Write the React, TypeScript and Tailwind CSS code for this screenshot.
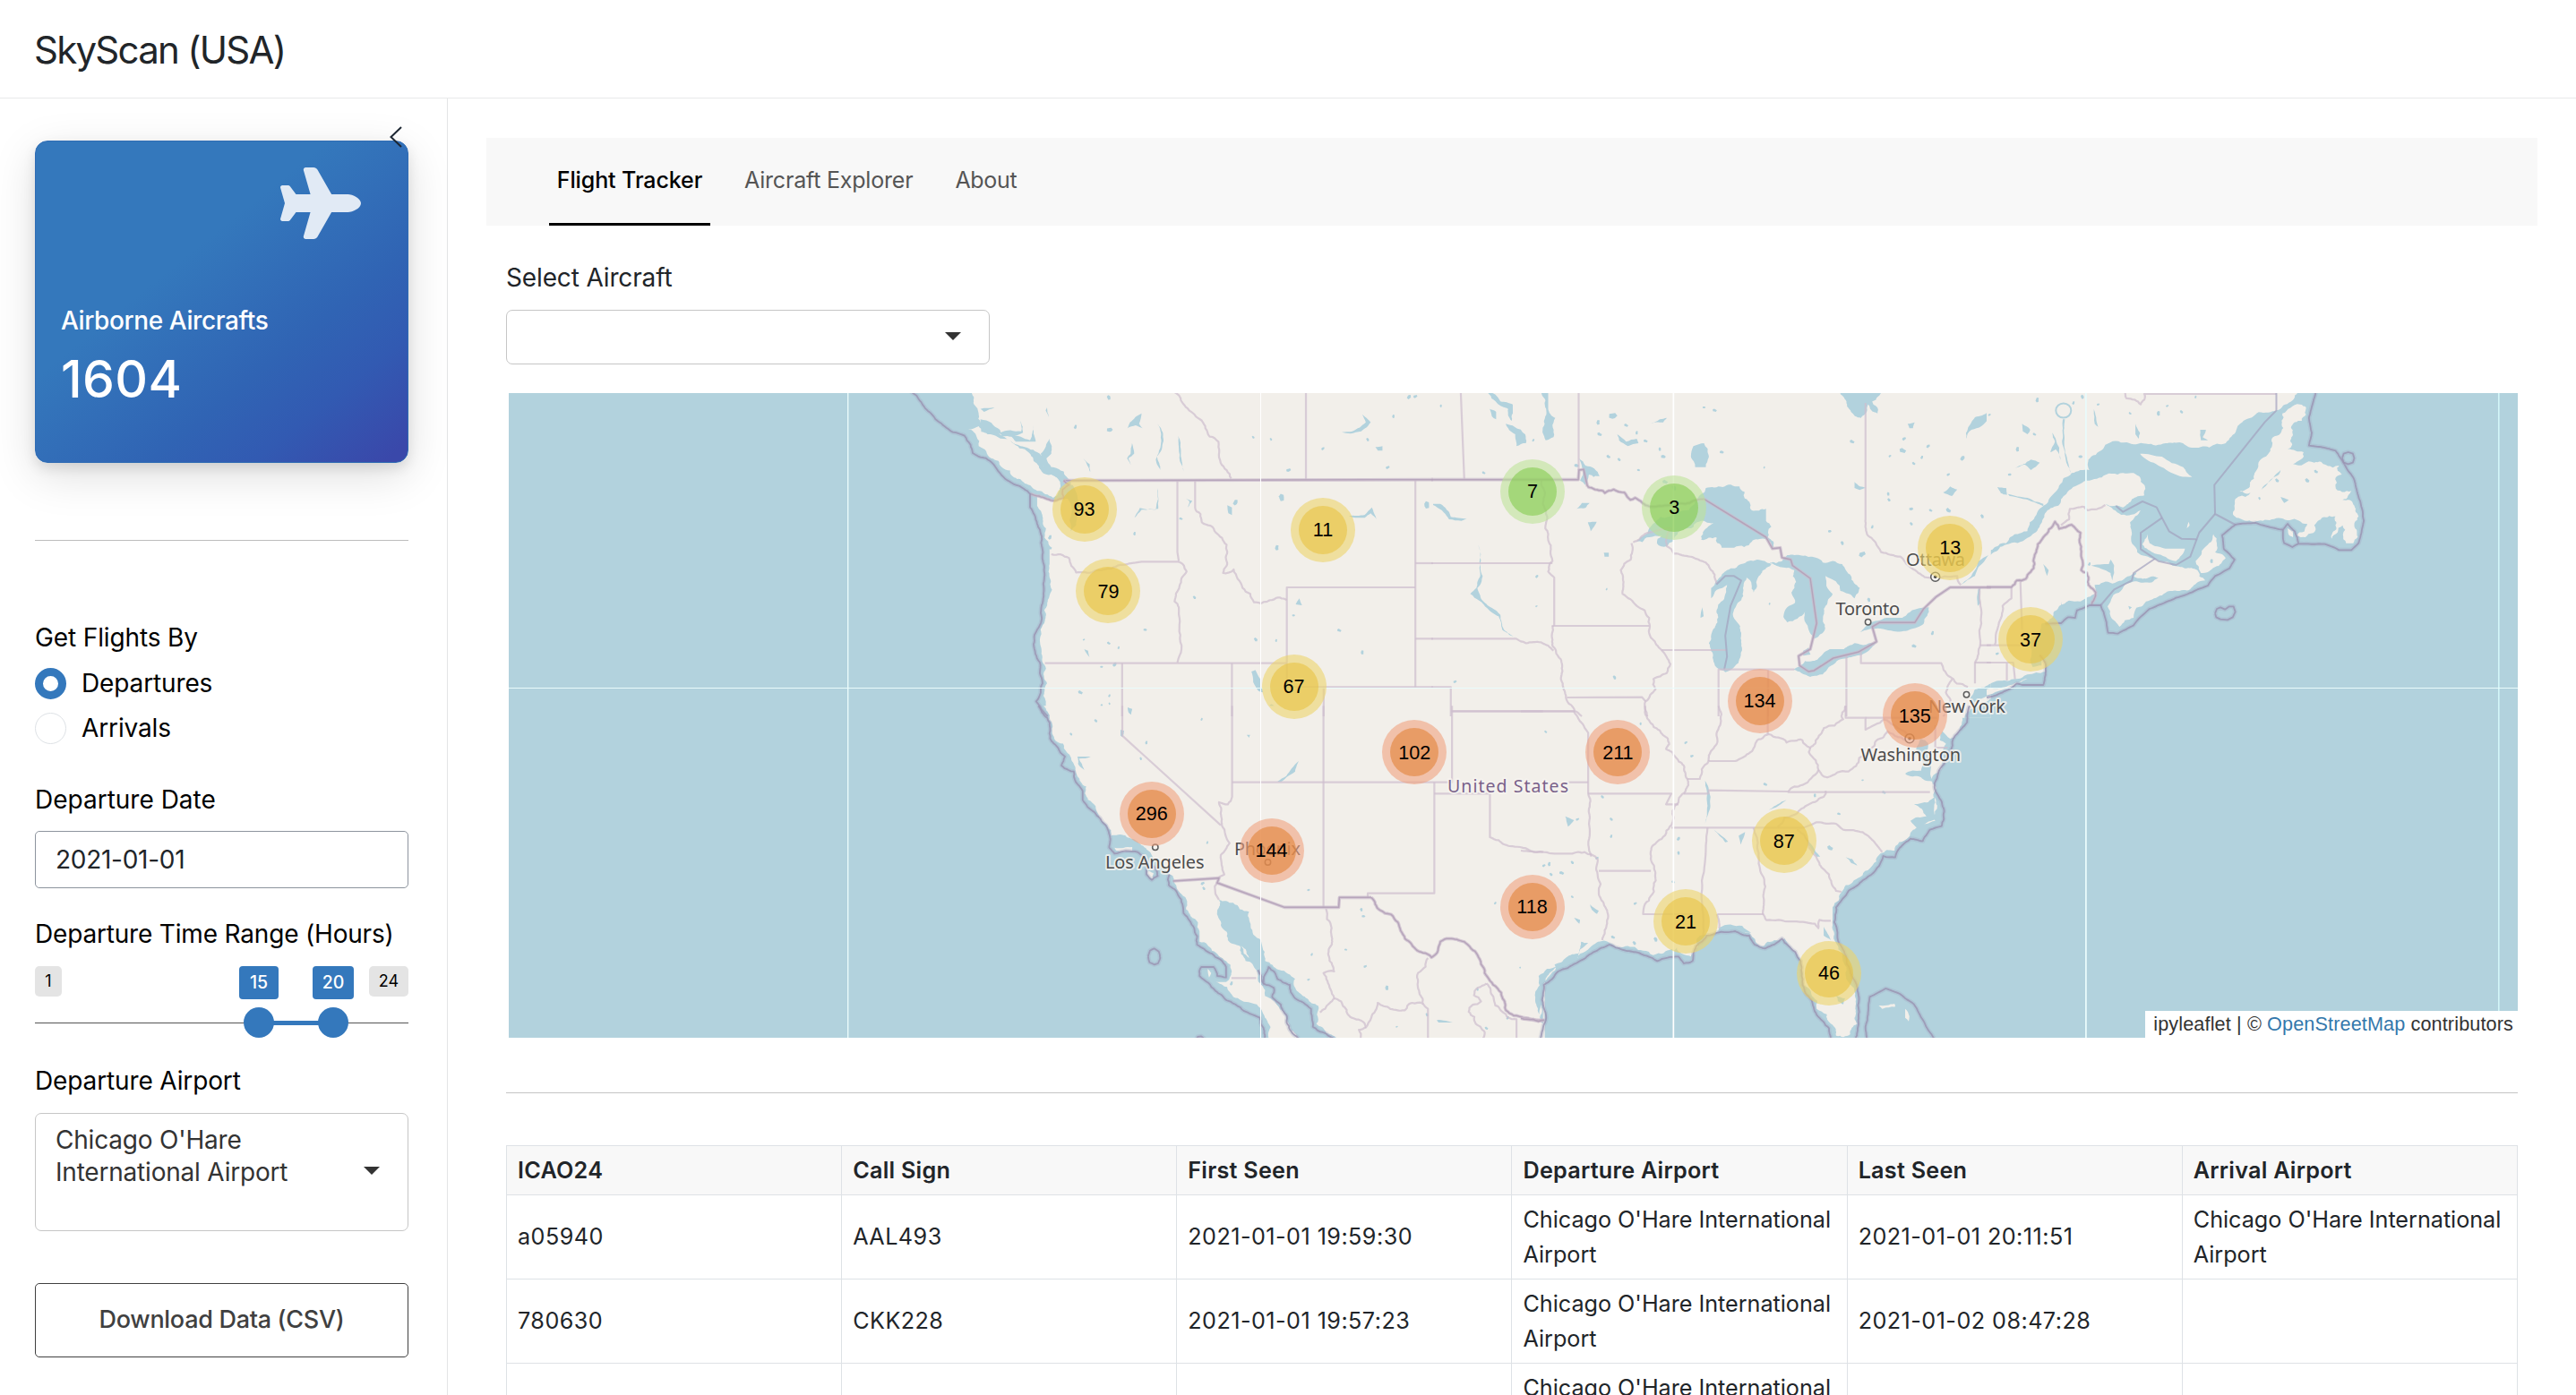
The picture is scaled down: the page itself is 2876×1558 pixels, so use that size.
import { FaPlane } from "react-icons/fa6";

type Kind = "land" | "water" | "state" | "nation" | "sea" | "seaLight";
type Shape = [Kind, number, string];
type Sheet = { x: number; y: number; shapes: Shape[]; specks: number[][] };

// Sheets of the base map. Each has its own origin and a common scale.
const SX = 0.3954;
const SY = 1 / 3;

const SHEETS: Sheet[] = [
  {
    x: 980,
    y: 430,
    shapes: [
      ["land", 7, "265,20 270,60 285,100 290,125 345,165 395,200 430,215 450,250 490,285 525,290 545,320 545,350 540,380 505,388 450,375 450,405 465,440 475,480 485,540 485,600 487,650 480,720 472,790 458,850 462,900 475,950 478,1000 468,1040 475,1080 495,1115 1580,1115 1580,20"],
      ["land", 9, "255,148 285,138 310,165 370,180 415,215 450,265 490,300 515,330 520,365 495,378 450,355 415,330 385,310 350,275 320,245 285,205"],
      ["water", 5, "290,115 345,150 350,165 320,160 290,140"],
      ["water", 6, "425,215 450,225 490,275 525,290 528,330 505,310 470,275 440,255"],
      ["water", 4, "520,330 550,335 570,400 560,470 545,490 548,420 530,370 500,385 515,350"],
      ["water", 5, "345,160 405,155 403,120 410,160 350,172"],
      ["water", 4, "375,170 430,185 440,135 446,190 390,190"],
      ["water", 4, "460,230 485,180 490,230 470,250"],
      ["water", 4, "290,80 330,75 300,90"],
      ["water", 3, "1055,960 1066,955 1080,985 1088,1030 1075,1025 1060,995"],
      ["water", 3, "718,195 724,230 708,245 715,268 704,245 714,230"],
      ["water", 3, "790,130 805,160 802,215 788,240 798,285 785,250 798,210 800,165"],
      ["water", 3, "848,170 856,220 864,290 853,255 850,210"],
      ["water", 3, "478,75 483,108 474,85"],
      ["water", 3, "580,245 598,265 600,292 592,270"],
      ["water", 3, "712,125 745,95 738,130 748,145 728,135 705,145"],
      ["water", 3, "1330,438 1375,435 1395,410 1408,450 1392,430 1375,445 1340,443"],
      ["water", 3, "1310,158 1340,155 1378,125 1368,98 1392,125 1365,155 1335,163"],
      ["water", 3, "725,445 740,412 785,418 790,345 792,415 745,418"],
      ["water", 3, "987,403 1000,410 1000,436 990,430"],
      ["water", 3, "870,380 888,388 876,410 880,390"],
      ["water", 2, "1180,735 1190,715 1198,738"],
      ["water", 2, "583,885 594,890 598,912 590,900"],
      ["water", 2, "705,1078 718,1080 722,1105 710,1100"],
      ["water", 2, "1405,208 1425,205 1425,220 1412,220"],
      ["state", 7, "835,20 858,55 895,100 925,145 962,190 968,260 998,313"],
      ["state", 0, "1209,20 1209,315"],
      ["state", 0, "846,322 846,560 850,590"],
      ["state", 8, "896,322 896,410 915,460 985,535 975,630 1005,618 1030,680 1062,728 1135,712 1155,720"],
      ["state", 6, "490,567 540,580 560,628 620,620 660,615 710,598 745,592 850,592"],
      ["state", 6, "850,592 872,625 838,725 850,745 846,930"],
      ["state", 0, "472,932 1155,932"],
      ["state", 0, "690,932 690,1110"],
      ["state", 0, "1000,932 1000,1110"],
      ["state", 0, "1518,678 1155,678 1155,1012 1568,1012"],
      ["state", 0, "1259,1012 1259,1110"],
      ["state", 0, "1518,320 1518,1012"],
      ["state", 0, "1518,597 1568,597"],
      ["state", 0, "1518,850 1568,850"],
      ["nation", 0, "525,320 1568,317"],
      ["nation", 4, "525,320 540,335 522,350 525,378 500,388 455,372 430,365"],
      ["sea", 4, "92,20 150,95 212,158 245,170 262,200 268,228 305,245 345,295 390,335 430,365 430,410 450,465 465,550 470,650 463,780 450,820 440,868 458,930 465,1000 447,1060 480,1110"],
    ],
    specks: [[652, 42, 8], [655, 150, 10], [558, 140, 7], [1060, 175, 5], [1110, 182, 5], [1257, 213, 6], [1160, 285, 8], [1383, 183, 6], [1500, 40, 8], [1518, 38, 7], [1456, 105, 6], [1440, 276, 7], [856, 448, 6], [1127, 545, 9], [894, 712, 6], [755, 820, 6], [582, 853, 4], [652, 865, 6], [680, 880, 5], [669, 936, 8], [632, 944, 5], [1067, 853, 7], [1125, 856, 5], [1303, 822, 7], [1368, 896, 7], [1174, 772, 5], [572, 1030, 8], [654, 1041, 5], [632, 1075, 6], [654, 1068, 4], [914, 1092, 4], [1113, 1076, 8], [1140, 377, 12], [1010, 393, 10], [725, 498, 6], [486, 510, 8], [485, 545, 8], [1550, 402, 12]],
  },
  {
    x: 1600,
    y: 430,
    shapes: [
      ["land", 0, "-5,20 1575,20 1575,1115 -5,1115"],
      ["water", 10, "565,525 610,480 690,430 740,390 770,345 865,340 880,380 900,420 940,415 940,455 955,475 945,510 962,545 935,515 900,525 850,545 815,545 800,510 757,518 762,500 792,462 745,460 720,480 690,500 660,540 632,530 645,505 610,510"],
      ["water", 8, "955,600 915,585 870,600 830,620 785,680 785,715 830,670 800,760 787,830 790,900 805,950 825,962 850,945 872,880 870,830 855,790 860,730 875,680 885,645 905,695 920,640 945,610"],
      ["water", 8, "950,595 1020,620 1025,660 1022,730 990,770 1000,795 1050,760 1075,850 1104,825 1108,740 1128,700 1108,640 1150,690 1190,715 1205,680 1180,640 1155,600 1100,595 1080,578 1000,570 985,590"],
      ["water", 6, "1018,953 1050,925 1085,920 1120,885 1160,885 1190,865 1255,862 1230,890 1140,925 1100,970 1065,978 1040,965"],
      ["water", 3, "1045,890 1060,880 1066,903 1045,907"],
      ["water", 6, "1205,828 1230,795 1280,780 1325,780 1340,765 1400,745 1385,800 1345,820 1300,825 1240,815"],
      ["water", 7, "150,20 190,55 225,65 225,95 222,120 212,80 180,60 165,45"],
      ["water", 6, "205,130 230,140 260,165 262,195 235,205 232,165"],
      ["water", 7, "300,20 325,20 325,80 345,110 340,175 318,185 315,130 320,90"],
      ["water", 4, "160,80 178,90 178,115 166,105"],
      ["water", 6, "735,205 765,195 778,235 770,275 740,275 728,240"],
      ["water", 8, "1145,20 1268,20 1240,55 1255,95 1228,65 1208,110 1180,90 1165,50"],
      ["water", 6, "1568,90 1530,108 1505,180 1520,150 1568,115"],
      ["water", 6, "1515,1055 1530,1020 1575,995 1575,1040 1550,1050 1525,1070"],
      ["water", 5, "1500,1115 1520,1085 1575,1050 1575,1115"],
      ["water", 4, "405,415 420,395 442,395 430,412"],
      ["water", 3, "482,562 496,562 496,575 484,575"],
      ["water", 4, "412,245 430,270 455,280 470,305 440,300 430,335 415,320 425,285"],
      ["water", 4, "520,165 545,190 575,180 580,195 550,205 525,185"],
      ["water", 4, "612,130 640,115 660,110 650,125"],
      ["water", 4, "1190,325 1205,340 1222,345 1205,352 1190,345"],
      ["water", 4, "1440,360 1460,340 1480,350 1465,372"],
      ["water", 3, "1340,130 1360,125 1355,145 1345,145"],
      ["water", 3, "1540,680 1547,680 1545,730 1538,740"],
      ["water", 3, "437,460 462,458 445,490"],
      ["water", 3, "0,398 20,398 45,425 50,442 95,448 80,455 45,450 25,420 0,402"],
      ["water", 4, "127,535 132,600 140,640 125,680 135,715 190,770 200,820 235,848 195,820 185,775 130,722 105,700 122,680 133,640"],
      ["water", 3, "760,745 764,775 755,780"],
      ["water", 3, "1568,570 1540,610 1530,640 1490,670 1520,640 1540,590"],
      ["state", 0, "78,20 88,315"],
      ["state", 0, "411,20 411,285"],
      ["state", 6, "305,320 310,400 322,440 325,520 337,590 325,625 342,645 342,806"],
      ["state", 0, "-5,597 337,597"],
      ["state", 0, "335,807 610,807"],
      ["state", 5, "-5,850 235,850 262,865 305,862 340,890"],
      ["state", 6, "338,807 336,860 342,880 365,960 375,1040 400,1092 420,1110"],
      ["state", 0, "50,1093 400,1093"],
      ["state", 0, "-5,1012 50,1012 50,1110"],
      ["state", 6, "560,530 558,585 530,620 535,700 575,740 610,780 612,807 618,850 645,888 670,935 660,965 622,985 628,1020 600,1060 605,1110"],
      ["state", 0, "378,1047 590,1046 600,1060"],
      ["state", 0, "645,888 828,888"],
      ["state", 6, "565,527 640,485 672,480 660,540 680,565 770,595 795,635 800,665"],
      ["seaLight", 0, "800,668 825,640 850,640 870,655 840,740 825,840 830,910 822,953"],
      ["state", 0, "806,1110 806,953 1020,953"],
      ["state", 0, "946,955 946,1110"],
      ["state", 0, "1167,905 1167,1110"],
      ["state", 6, "1208,895 1208,932 1435,932 1455,975 1510,1012"],
      ["state", 5, "1465,985 1448,1030 1465,1080 1440,1110"],
      ["state", 4, "1542,680 1545,870 1530,930 1530,1000"],
      ["state", 0, "1530,930 1575,930"],
      ["state", 0, "1545,872 1575,872"],
      ["state", 5, "1221,60 1221,450 1225,500 1265,560 1320,575 1370,630 1410,650 1480,640 1490,670"],
      ["nation", 0, "-5,317 410,317 412,285 425,283 436,340"],
      ["nation", 6, "436,340 480,355 485,362 510,350 540,360 557,385 570,378 600,403 680,400 765,382"],
      ["nation", 0, "765,382 940,510 958,548 980,545 985,578 1010,585 1015,605 1065,648 1083,798 1065,885 1032,908 1035,940 1060,960 1075,957 1130,915 1200,895 1252,860 1240,810 1260,796 1360,796 1385,750 1420,710 1460,678 1575,678"],
    ],
    specks: [[22, 70, 5], [143, 294, 6], [283, 185, 5], [293, 641, 6], [292, 741, 4], [490, 684, 4], [508, 103, 14], [466, 125, 8], [545, 135, 7], [600, 188, 7], [470, 165, 8], [495, 240, 7], [525, 250, 6], [580, 285, 5], [650, 240, 8], [655, 325, 9], [680, 345, 9], [935, 276, 4], [815, 225, 7], [795, 85, 7], [1183, 190, 8], [1290, 238, 5], [1326, 220, 11], [1357, 263, 6], [1455, 300, 6], [1495, 245, 9], [1398, 205, 7], [1380, 242, 6], [1285, 365, 6], [1287, 385, 6], [1455, 420, 9], [1350, 415, 7], [1240, 475, 6], [1350, 465, 6], [1212, 567, 12], [1155, 530, 7], [1120, 490, 6], [1230, 720, 7], [1410, 831, 7], [950, 733, 4], [62, 994, 6], [512, 980, 7], [710, 1095, 5], [1358, 875, 8], [1405, 420, 6], [765, 75, 5], [640, 215, 6], [575, 160, 6], [1330, 180, 7], [1550, 440, 7], [455, 300, 8], [405, 270, 8]],
  },
  {
    x: 2220,
    y: 430,
    shapes: [
      ["land", 8, "-5,20 885,20 815,85 720,120 700,150 670,195 575,210 500,195 390,192 330,200 290,240 285,285 235,295 170,385 110,490 50,530 -5,572"],
      ["land", 8, "-5,580 50,535 110,512 160,430 220,365 320,310 380,295 425,305 442,340 440,370 380,410 330,400 375,435 430,420 400,460 405,500 420,560 470,580 400,640 350,665 300,670 305,700 260,725 200,740 180,780 150,800 120,850 125,900 160,930 160,960 110,970 75,985 -5,1005"],
      ["land", 9, "470,585 520,605 590,620 612,655 540,690 490,705 445,725 410,780 370,810 345,775 350,710 390,665 480,646 410,640 450,590"],
      ["land", 7, "635,500 645,530 640,560 670,580 640,610 600,630 585,590 610,545"],
      ["land", 6, "450,500 455,530 500,548 555,548 530,590 470,565 435,535"],
      ["land", 4, "428,230 490,240 550,275 575,308 540,305 480,270"],
      ["land", 12, "880,65 897,75 885,120 855,180 845,215 890,225 860,265 920,260 990,270 998,300 980,340 1025,355 1000,385 1030,400 1045,440 1030,530 1010,530 1000,470 970,515 980,440 920,470 895,510 870,505 900,465 800,450 700,445 695,410 740,360 705,355 735,345 760,280 800,180 830,95"],
      ["land", 3, "1020,400 1030,405 1000,460 990,450"],
      ["land", 4, "560,480 565,458 568,470"],
      ["land", 4, "845,480 860,490 860,510 850,505"],
      ["land", 6, "-5,1020 75,998 110,985 60,1015 -5,1040"],
      ["water", 3, "780,335 825,285 820,300 770,352"],
      ["water", 4, "25,342 50,345 52,368 35,362"],
      ["water", 4, "180,160 200,210 205,255 190,215 175,225 188,190"],
      ["water", 4, "95,130 118,150 110,165 97,155"],
      ["water", 4, "75,280 120,250 145,260 120,285 100,265"],
      ["water", 3, "210,115 216,115 214,190 225,260 232,300 220,260 208,190"],
      ["water", 3, "298,80 305,120 310,140 300,130"],
      ["water", 3, "415,130 428,160 424,180 415,165"],
      ["water", 3, "598,150 614,150 605,175 620,185 600,185"],
      ["water", 3, "205,725 215,780 200,770"],
      ["water", 3, "155,600 170,620 165,640"],
      ["water", 3, "825,375 848,385 835,395"],
      ["water", 3, "395,740 405,745 398,752"],
      ["water", 3, "55,365 110,378 155,398 155,406 110,384 60,372"],
      ["water", 3, "345,585 355,605 350,655 345,630 290,605 340,600"],
      ["water", 4, "120,860 150,880 150,940 125,945 118,920"],
      ["state", 5, "205,470 228,450 230,415 270,408 280,420 330,402"],
      ["state", 5, "65,677 65,715 40,740 18,870"],
      ["state", 0, "90,650 95,820"],
      ["state", 0, "-5,872 100,872"],
      ["state", 0, "-5,930 70,930 75,985"],
      ["state", 0, "52,932 52,990"],
      ["state", 7, "385,20 390,45 430,65 440,30 813,30"],
      ["seaLight", 0, "813,27 813,85 780,125 638,335 640,432 697,468"],
      ["seaLight", 0, "640,432 595,495 588,517 545,515 510,490 490,445 475,410 435,390 380,425 360,405"],
      ["seaLight", 0, "490,445 430,495 430,550 480,590 530,603 570,575 588,517"],
      ["seaLight", 0, "317,738 355,685 405,655 410,630 470,582"],
      ["nation", 6, "-5,677 65,677 80,655 105,650 130,600 135,560 155,510 188,458 200,482 235,468 260,495 262,620 278,630 280,660 303,695 290,738"],
      ["sea", 2, "925,20 905,110 913,160 905,203 980,220 1005,265 1030,310 1050,390 1060,455 1045,530 1025,553 990,553 950,533 875,532 865,490 845,465 832,485 835,530 858,543 875,532"],
      ["sea", 2, "832,485 810,480 755,462 697,468 660,503 665,550 695,585 680,615 640,640 620,672 500,728 455,750 410,805 365,833 338,830 325,760 317,738 285,738 250,755 245,780 225,778 205,798 160,800"],
      ["sea", 3, "145,905 160,930 162,960 155,1005 95,1005 80,1000 40,1030 -5,1047"],
      ["sea", 0, "999,245 1003,230 1016,225 1029,230 1033,245 1029,260 1016,265 1003,260 999,245"],
      ["sea", 0, "640,765 645,750 655,745 668,752 680,742 692,742 697,760 690,778 675,787 655,785 643,778 640,765"],
    ],
    specks: [[138, 50, 8], [265, 40, 7], [3, 100, 5], [82, 215, 8], [60, 300, 6], [480, 95, 8], [545, 90, 6], [585, 40, 5], [505, 70, 5], [260, 240, 7], [240, 60, 6], [130, 165, 6], [400, 95, 5], [310, 65, 5], [285, 600, 6], [25, 900, 6], [345, 610, 5], [630, 590, 7], [815, 320, 7], [900, 320, 8], [925, 290, 7], [765, 380, 5], [190, 20, 6]],
  },
  {
    x: 1100,
    y: 790,
    shapes: [
      ["land", 8, "165,-5 185,20 190,60 195,105 230,150 250,190 260,230 285,265 290,310 320,360 345,395 355,430 430,450 460,480 500,520 530,565 540,600 570,650 580,700 605,750 605,785 640,815 680,850 695,880 680,920 650,920 700,970 750,990 790,1040 800,1110 882,1110 850,1050 820,990 780,930 765,880 735,850 720,800 685,780 665,730 655,680 660,645 700,655 745,685 750,740 780,790 790,850 830,880 875,910 880,950 940,1000 935,1060 1000,1110 1580,1110 1580,-5"],
      ["land", 4, "365,470 415,468 415,482 370,480"],
      ["land", 4, "458,545 475,555 472,575 460,565"],
      ["land", 5, "722,797 735,810 745,840 730,825"],
      ["land", 3, "628,875 638,890 632,905"],
      ["water", 5, "1575,920 1548,950 1555,1030 1575,1060"],
      ["water", 3, "402,0 415,5 412,25 405,18"],
      ["water", 3, "382,75 392,78 388,100 382,95"],
      ["water", 4, "260,165 298,165 265,172 280,210 262,190"],
      ["water", 3, "885,180 875,215 850,235 835,250 825,248 850,230 865,205"],
      ["water", 3, "1275,1048 1300,1050 1320,1056 1280,1056"],
      ["water", 3, "738,92 748,92 745,102"],
      ["state", 0, "387,-5 387,95 665,395"],
      ["state", 5, "697,-5 697,300 685,325 660,318 668,395 690,455 665,495 675,560 655,575"],
      ["state", 0, "955,-5 955,670"],
      ["state", 0, "697,251 1318,251 1318,-5"],
      ["state", 0, "1318,13 1575,13"],
      ["state", 0, "1268,251 1268,623 1080,623 1080,637"],
      ["state", 6, "1268,289 1425,289 1425,435 1450,445 1480,465 1510,468 1575,485"],
      ["state", 7, "962,675 965,710 978,740 970,810 985,885 955,890 975,945 985,975 960,1010 945,1022"],
      ["state", 8, "985,975 1015,1005 1035,1040 1075,1072 1090,1040 1108,990 1185,1015 1205,990 1235,992 1225,950 1222,890 1250,840"],
      ["state", 4, "1235,992 1250,1010 1250,1110"],
      ["state", 5, "1075,1072 1055,1080 1060,1110"],
      ["state", 0, "695,907 765,907"],
      ["state", 9, "1415,925 1380,965 1400,985 1365,1020 1385,1060 1410,1095 1405,1110"],
      ["state", 9, "1415,925 1435,970 1460,1020 1500,1045 1500,1110"],
      ["state", 0, "655,588 648,600 650,625 660,645"],
      ["nation", 0, "530,582 660,572 655,588 845,670 998,670 1000,637 1090,637"],
      ["nation", 6, "1090,637 1115,680 1165,720 1185,775 1220,815 1260,838 1285,785 1310,775 1352,785 1390,830 1410,890 1445,940 1470,1015 1520,1040 1575,1050"],
      ["sea", 5, "150,-5 175,35 183,105 225,165 215,195 235,210 250,215 275,280 275,310 340,395 350,470 365,490 430,485 455,520 455,560 470,578 487,565 475,530"],
      ["sea", 5, "520,560 518,595 545,630 560,690 590,740 598,795 640,825 680,870 680,905 655,900 645,870 610,870 605,900 650,950 720,1005 775,1040 790,1110"],
      ["sea", 5, "770,880 785,925 800,870 825,910 860,930 875,975 920,1010 925,1070 985,1110"],
      ["sea", 5, "785,925 815,940 810,970 850,1030 860,1080 885,1110"],
      ["sea", 2, "460,835 465,815 477,808 490,818 494,840 488,858 477,862 464,855 460,835"],
      ["sea", 0, "595,1112 600,1104 610,1102 620,1112"],
    ],
    specks: [[455, 118, 6], [439, 172, 5], [611, 40, 5], [242, 90, 5], [312, 45, 6], [614, 590, 7], [617, 607, 6], [913, 612, 5], [1062, 678, 6], [1068, 700, 6], [1018, 812, 5], [1073, 868, 6], [1134, 940, 8], [913, 912, 5], [1440, 656, 5], [1511, 872, 4], [1475, 1040, 6], [1247, 1030, 6], [1390, 945, 5], [922, 828, 5], [695, 925, 7], [627, 453, 5], [1415, 1075, 6], [1162, 1070, 4]],
  },
  {
    x: 1700,
    y: 790,
    shapes: [
      ["land", 9, "-5,-5 1265,-5 1240,50 1205,105 1185,190 1155,240 1160,300 1170,340 1165,380 1110,405 1090,435 1050,480 1010,490 980,540 935,580 900,620 875,670 875,730 885,790 915,870 935,940 940,1020 925,1095 885,1100 870,1060 830,1010 815,960 790,900 785,850 740,775 710,780 680,800 660,790 640,755 600,740 545,755 500,765 495,800 475,835 435,805 400,825 340,815 290,800 240,785 200,795 155,840 95,865 60,920 45,970 55,1010 50,1070 40,1112 -5,1112"],
      ["water", 6, "1125,105 1145,120 1150,180 1158,250 1125,235 1080,222 1125,212 1130,180 1112,150"],
      ["water", 6, "1165,300 1168,375 1115,405 1095,380 1140,365 1105,325 1145,318"],
      ["water", 4, "1185,80 1207,105 1205,135 1178,110"],
      ["water", 4, "885,965 910,975 905,995 890,985"],
      ["water", 6, "555,738 620,732 645,755 600,748 545,762"],
      ["water", 7, "60,925 100,865 45,900 35,960 48,1040 55,980"],
      ["water", 7, "95,875 155,840 185,790 165,785 160,825 90,862"],
      ["water", 6, "375,830 420,810 440,820 400,840"],
      ["water", 4, "912,502 930,508 945,530 928,522"],
      ["water", 3, "190,660 215,682 210,692 195,678"],
      ["water", 3, "145,705 162,712 160,725"],
      ["water", 3, "120,365 145,378 128,400"],
      ["water", 3, "515,245 525,270 530,330 515,390 522,330 520,280"],
      ["water", 3, "540,410 580,450 572,452"],
      ["water", 3, "610,430 628,418 615,460"],
      ["water", 3, "690,345 720,325 745,310 715,335"],
      ["water", 3, "850,735 870,780 850,765"],
      ["water", 3, "795,430 840,500 830,500"],
      ["land", 4, "1005,1000 1050,993 1052,1003 1015,1010"],
      ["land", 4, "1080,1010 1092,1035 1090,1052 1080,1040"],
      ["state", 0, "-5,13 145,13"],
      ["state", 5, "145,13 165,50 185,85 185,289 187,340 194,500"],
      ["state", 0, "130,251 185,251"],
      ["state", 0, "185,289 420,289 405,325 440,325"],
      ["state", 0, "215,548 362,548"],
      ["state", 7, "-5,480 60,485 90,490 140,490 175,485 212,510 215,620 240,690 225,780"],
      ["state", 8, "345,-5 360,50 410,105 405,140 455,195 465,240 460,280 430,330 415,400 380,450 365,520 370,600 345,660 340,693 480,693"],
      ["state", 6, "553,-5 550,110 525,180"],
      ["state", 9, "465,240 500,240 525,180 600,180 660,115 695,90 745,118 790,110 812,135 850,70 905,40 912,-5"],
      ["state", 0, "692,-5 692,90"],
      ["state", 0, "455,289 525,289 525,278 750,282 750,284 1150,284"],
      ["state", 0, "420,403 790,403"],
      ["state", 3, "522,403 505,640 510,765"],
      ["state", 4, "652,403 670,540 685,600 678,690 688,713 825,725 835,740 838,712 870,715"],
      ["state", 0, "550,693 680,693"],
      ["state", 3, "548,693 555,740"],
      ["state", 6, "775,410 820,490 865,560 885,615 900,618"],
      ["state", 3, "790,403 830,385 885,390 905,410 960,418 1015,485"],
      ["state", 7, "855,280 850,300 800,330 740,370 720,400"],
      ["state", 7, "750,282 790,260 835,210 808,150 812,135"],
      ["state", 7, "835,210 860,235 920,215 950,170 1000,110 1030,80 1060,100 1080,110"],
      ["state", 6, "912,-5 912,35 968,35 968,75 1020,40 1050,60 1090,95"],
      ["state", 0, "968,35 1170,35"],
      ["state", 0, "1165,60 1165,135 1200,135"],
      ["nation", 5, "-5,1042 30,1045 45,1052 62,1048"],
      ["sea", 4, "1262,-5 1255,50 1213,115 1210,140 1190,190 1163,255 1175,300 1190,350 1183,398 1150,410 1130,448 1095,440 1065,470 1052,503 1018,498 985,560 920,615 885,670 880,720 893,790 915,860 945,940 950,1020 940,1110"],
      ["sea", 4, "870,1110 865,1075 830,1030 815,980 790,930 785,850 770,820 732,775 685,808 655,795 640,765 600,750 520,765 490,800 480,850 455,858 440,835 380,850 320,820 245,795 200,820 100,885 60,930 55,980 65,1050 50,1110"],
      ["sea", 2, "1162,1110 1105,995 1065,960 1025,942 980,970 975,1030 968,1070 972,1110"],
    ],
    specks: [[478, 163, 6], [65, 82, 5], [333, 55, 5], [461, 118, 6], [425, 585, 6], [75, 525, 7], [110, 555, 8], [60, 530, 6], [140, 520, 6], [80, 560, 6], [140, 635, 5], [210, 505, 6], [318, 657, 6], [960, 244, 4], [893, 357, 6], [868, 471, 10], [225, 300, 6], [250, 375, 6], [440, 440, 7], [440, 488, 6], [250, 432, 6], [155, 375, 6], [1020, 285, 7], [685, 258, 7], [825, 295, 6], [375, 778, 8], [255, 770, 7], [315, 790, 7], [1040, 1105, 5]],
  },
];

// Deterministic midpoint displacement gives coasts and rivers a natural outline.
function outline(text: string, amp: number, closed: boolean) {
  let seed = text.length * 7919 + 13;
  const rnd = () => {
    seed = (seed * 1103515245 + 12345) % 2147483648;
    return seed / 2147483648 - 0.5;
  };
  const pts = text.split(" ").map((p) => p.split(",").map(Number));
  if (closed) pts.push(pts[0]);
  const out: number[][] = [pts[0]];
  const split = (a: number[], b: number[], k: number, depth: number) => {
    const dx = b[0] - a[0];
    const dy = b[1] - a[1];
    const len = Math.hypot(dx, dy);
    if (depth === 0 || len < 9) {
      out.push(b);
      return;
    }
    const off = (rnd() * 2 * k * Math.min(len, 70)) / 45;
    const m = [(a[0] + b[0]) / 2 - (dy / len) * off, (a[1] + b[1]) / 2 + (dx / len) * off];
    split(a, m, k * 0.85, depth - 1);
    split(m, b, k * 0.85, depth - 1);
  };
  for (let i = 1; i < pts.length; i++) {
    const a = pts[i - 1];
    const b = pts[i];
    if (amp === 0 || a[0] === b[0] || a[1] === b[1]) out.push(b);
    else split(a, b, amp, 4);
  }
  return "M" + out.map((p) => p[0].toFixed(1) + " " + p[1].toFixed(1)).join("L") + (closed ? "Z" : "");
}

function speck([x, y, r]: number[]) {
  const pts = [];
  for (let i = 0; i < 7; i++) {
    const a = (i / 7) * Math.PI * 2;
    const k = 0.4 + 0.5 * Math.abs(Math.sin(x * 1.7 + y * 0.9 + i * 2.3));
    pts.push(`${(x + Math.cos(a) * r * k).toFixed(1)} ${(y + Math.sin(a) * r * 1.2 * k).toFixed(1)}`);
  }
  return "M" + pts.join("L") + "Z";
}

const LINE: Record<string, [string, number, number][]> = {
  state: [["#cfbfcf", 2.2, 0.72]],
  nation: [
    ["#cbbccd", 3.6, 0.75],
    ["#b09db5", 1.5, 0.8],
  ],
  sea: [
    ["#a3a9c4", 5, 0.3],
    ["#9b95b3", 1.8, 0.85],
  ],
  seaLight: [["#a3a2bf", 2, 0.7]],
};

const LABELS: [string, number, number, number][] = [
  ["Ottawa", 2128, 632, 66],
  ["Toronto", 2049.5, 686.5, 71.5],
  ["New York", 2153, 796, 86],
  ["Washington", 2077.5, 849.8, 111.5],
  ["Los Angeles", 1234, 969.8, 110.5],
  ["Phoenix", 1378, 954.5, 74],
];

const TOWNS: [number, number, boolean][] = [
  [2160.7, 644.3, true],
  [2085.6, 694.7, false],
  [2195.5, 775.7, false],
  [2132, 824.7, true],
  [1289.8, 946.3, false],
  [1415.5, 963, false],
];

const CLUSTERS: [number, number, number][] = [
  [93, 1210.5, 568.7],
  [79, 1237.4, 660.3],
  [11, 1477, 592],
  [67, 1444.6, 766.7],
  [7, 1711, 549],
  [3, 1869.3, 567],
  [13, 2177.3, 611.7],
  [37, 2267, 714.3],
  [134, 1964.6, 782.7],
  [135, 2137.7, 799.3],
  [296, 1285.8, 908.7],
  [144, 1419.5, 950],
  [102, 1579.2, 840.3],
  [118, 1710.5, 1013],
  [211, 1806.4, 840.3],
  [87, 1991.8, 939.3],
  [21, 1881.9, 1029.3],
  [46, 2042, 1087],
];

const MAP_X = 568;
const MAP_Y = 439;

function clusterTone(n: number) {
  if (n < 10) return ["bg-[rgba(190,226,153,0.6)]", "bg-[rgba(133,204,80,0.6)]"];
  if (n < 100) return ["bg-[rgba(237,212,106,0.6)]", "bg-[rgba(231,195,67,0.6)]"];
  return ["bg-[rgba(240,161,127,0.6)]", "bg-[rgba(226,132,56,0.6)]"];
}

function Cluster({ n, x, y }: { n: number; x: number; y: number }) {
  const [ring, core] = clusterTone(n);
  return (
    <div
      className={`absolute flex size-[72px] -translate-1/2 items-center justify-center rounded-full ${ring}`}
      style={{ left: x - MAP_X, top: y - MAP_Y }}
    >
      <div
        className={`flex size-[54px] items-center justify-center rounded-full font-['Liberation_Sans',sans-serif] text-[21.6px] leading-none text-black ${core}`}
      >
        {n}
      </div>
    </div>
  );
}

function BaseMap() {
  return (
    <svg viewBox="568 439 2243 720" width={2243} height={720} className="block">
      <rect x={568} y={439} width={2243} height={720} fill="#b2d2dd" />
      {SHEETS.map((s, i) => (
        <g key={i} transform={`translate(${s.x} ${s.y}) scale(${SX} ${SY})`}>
          {s.shapes
            .filter(([k]) => k === "land" || k === "water")
            .map(([k, amp, d], j) => (
              <path key={j} d={outline(d, amp, true)} fill={k === "land" ? "#f2efea" : "#b2d2dd"} />
            ))}
          {s.specks.map((p, j) => (
            <path key={`k${j}`} d={speck(p)} fill="#b2d2dd" />
          ))}
        </g>
      ))}
      <ellipse cx={2303.8} cy={458.5} rx={8.5} ry={8} fill="none" stroke="#b2d2dd" strokeWidth={2} />
      {SHEETS.map((s, i) => (
        <g key={`l${i}`} transform={`translate(${s.x} ${s.y}) scale(${SX} ${SY})`} fill="none" strokeLinejoin="round">
          {s.shapes
            .filter(([k]) => k !== "land" && k !== "water")
            .flatMap(([k, amp, d], j) =>
              LINE[k].map(([color, w, o], n) => (
                <path
                  key={`${j}-${n}`}
                  d={outline(d, amp, false)}
                  stroke={color}
                  strokeWidth={w}
                  opacity={o}
                  vectorEffect="non-scaling-stroke"
                />
              )),
            )}
        </g>
      ))}
      {TOWNS.map(([x, y, capital], i) => (
        <g key={`t${i}`} fill="#f7f5f1" stroke="#5d5d5d" strokeWidth={1.5}>
          <circle cx={x} cy={y} r={capital ? 5 : 3.2} />
          {capital && <circle cx={x} cy={y} r={1.8} fill="#444" stroke="none" />}
        </g>
      ))}
      <g
        className="font-['Noto_Sans',sans-serif]"
        fontSize={20}
        stroke="#f6f4f0"
        strokeWidth={4}
        strokeLinejoin="round"
        strokeOpacity={0.8}
        paintOrder="stroke"
      >
        {LABELS.map(([t, x, y, w]) => (
          <text key={t} x={x} y={y} textLength={w} fill="#4c4c4c">
            {t}
          </text>
        ))}
        <text x={1616} y={884.8} textLength={135} fontSize={19.5} fill="#79618a">
          United States
        </text>
      </g>
      <g fill="#e9fbfb">
        <rect x={946} y={439} width={1.4} height={720} />
        <rect x={1407} y={439} width={1} height={720} fill="#fff" />
        <rect x={1867.5} y={439} width={1.7} height={720} fill="#fff" />
        <rect x={2328} y={439} width={1.8} height={720} />
        <rect x={2789} y={439} width={1.6} height={720} fill="#d3f6f8" />
        <rect x={568} y={768} width={2243} height={1} />
      </g>
    </svg>
  );
}

const COLUMNS = ["ICAO24", "Call Sign", "First Seen", "Departure Airport", "Last Seen", "Arrival Airport"];
const OHARE = "Chicago O'Hare International Airport";
const ROWS = [
  ["a05940", "AAL493", "2021-01-01 19:59:30", OHARE, "2021-01-01 20:11:51", OHARE],
  ["780630", "CKK228", "2021-01-01 19:57:23", OHARE, "2021-01-02 08:47:28", ""],
  ["", "", "", OHARE, "", ""],
];

function Caret({ className }: { className: string }) {
  return (
    <svg viewBox="0 0 18 9" className={`h-[9px] w-[18px] ${className}`}>
      <path d="M0 0H18L9 9Z" fill="#333" />
    </svg>
  );
}

function Sidebar() {
  return (
    <aside className="flex w-[500px] shrink-0 flex-col border-r border-[#e4e5e6] pr-[43px] pl-[39px] text-[28px] leading-10 tracking-[-0.13px] text-black">
      <div className="relative mt-[47px] flex h-[360px] shrink-0 flex-col rounded-[14px] border border-[#2f6cb4] bg-linear-[141deg,#3478bc_38%,#3064b4_66%,#325ab2_80%,#3a48aa_97%] pl-[28px] text-white shadow-[0_14px_50px_rgba(0,0,0,0.13),0_6px_14px_rgba(0,0,0,0.1)]">
        <FaPlane className="mt-[29px] mr-[52px] h-[80px] w-[90px] self-end text-[#e1eaf5]" />
        <span className="mt-[71px] font-medium tracking-[-0.4px]">Airborne Aircrafts</span>
        <span className="mt-4 text-[57px] leading-[60px] font-medium tracking-[0.4px]">1604</span>
        <svg viewBox="0 0 14 26" className="absolute -top-[18px] right-[6px] h-[26px] w-[14px]">
          <path d="M13 2 1.5 13 13 24" fill="none" stroke="#1d2733" strokeWidth={2} />
        </svg>
      </div>
      <div className="mt-[86px] h-px shrink-0 bg-[#bcbcbc]" />
      <div className="mt-[88px]">Get Flights By</div>
      <div className="mt-[11px] flex items-center">
        <span className="mr-[17px] size-[35px] rounded-full border-[9px] border-[#3478bc] bg-white" />
        Departures
      </div>
      <div className="mt-2.5 flex items-center">
        <span className="mr-[17px] size-[35px] rounded-full border border-[#dee2e6] bg-white" />
        Arrivals
      </div>
      <div className="mt-10 tracking-normal">Departure Date</div>
      <div className="mt-[15px] flex h-16 shrink-0 items-center rounded-[5px] border border-[#8d949e] pl-[22px] tracking-[-0.28px] text-[#212529]">
        2021-01-01
      </div>
      <div className="mt-[31px] tracking-[-0.18px] whitespace-nowrap">Departure Time Range (Hours)</div>
      <div className="relative mt-4 h-[81px] shrink-0 text-[19.5px] tracking-normal">
        <div className="flex items-start">
          <span className="flex h-[34px] w-[30px] items-center justify-center rounded-[5px] bg-[#e4e4e4] text-[18px]">1</span>
          <span className="ml-[198px] flex h-[37px] w-11 items-center justify-center rounded-[4px] bg-[#3478bc] pb-0.5 font-medium text-white">15</span>
          <span className="ml-[38px] flex h-[37px] w-[46px] items-center justify-center rounded-[4px] bg-[#3478bc] pb-0.5 font-medium text-white">20</span>
          <span className="ml-[17px] flex h-[34px] w-11 items-center justify-center rounded-[5px] bg-[#e4e4e4] text-[18px]">24</span>
        </div>
        <div className="absolute top-[63px] left-0 h-px w-full bg-[#555]" />
        <div className="absolute top-[61px] left-[250px] h-[5px] w-[83px] bg-[#3478bc]" />
        <div className="absolute top-[46px] left-[233px] size-[34px] rounded-full bg-[#3478bc]" />
        <div className="absolute top-[46px] left-[316px] size-[34px] rounded-full bg-[#3478bc]" />
      </div>
      <div className="mt-[27px]">Departure Airport</div>
      <div className="mt-4 flex h-[132px] shrink-0 justify-between rounded-[7px] border border-[#c6c6c6] pt-[11px] pr-[31px] pl-[22px] leading-9 tracking-[-0.2px] text-[#333]">
        <span>
          Chicago O'Hare
          <br />
          International Airport
        </span>
        <Caret className="mt-12" />
      </div>
      <div className="mt-[58px] flex h-[83px] shrink-0 items-center justify-center rounded-[5px] border border-[#404040] pb-0.5 text-[27px] font-medium tracking-[-0.3px] text-[#404040]">
        Download Data (CSV)
      </div>
    </aside>
  );
}

export default function App() {
  return (
    <div className="flex h-[1558px] w-full flex-col overflow-hidden bg-white font-['Inter',sans-serif] text-[#212529]">
      <header className="flex h-[110px] shrink-0 items-center border-b border-[#e8e9ea] pt-[3px] pl-[38px] text-[42px] leading-none tracking-[-1.75px]">
        SkyScan (USA)
      </header>
      <div className="flex min-h-0 flex-1">
        <Sidebar />
        <main className="min-w-0 flex-1 px-[43px]">
          <nav className="mt-11 flex h-[98px] gap-[26px] bg-[#f8f8f8] pl-[70px] text-[25px] text-[#555]">
            <span className="flex w-[180px] items-center justify-center border-b-[3px] border-black font-medium tracking-[-0.1px] text-black">
              Flight Tracker
            </span>
            <span className="flex items-center pr-[10px] pb-[3px] pl-[12px] tracking-[-0.2px]">Aircraft Explorer</span>
            <span className="flex items-center px-[11px] pb-[3px] tracking-[-0.3px]">About</span>
          </nav>
          <section className="px-[22px]">
            <div className="mt-[38px] text-[28px] leading-10 tracking-[-0.14px]">Select Aircraft</div>
            <div className="mt-4 flex h-[61px] w-[540px] justify-end rounded-[7px] border border-[#c6c6c6] pr-[31px]">
              <Caret className="mt-6" />
            </div>
            <div className="relative mt-8 ml-[3px] h-[720px] w-[2243px] overflow-hidden">
              <BaseMap />
              {CLUSTERS.map(([n, x, y]) => (
                <Cluster key={n} n={n} x={x} y={y} />
              ))}
              <div className="absolute right-0 bottom-0 h-[30px] bg-white pr-[5px] pl-[9px] font-['Liberation_Sans',sans-serif] text-[21.6px] leading-[30px] tracking-[0.14px] whitespace-nowrap text-[#333]">
                ipyleaflet | © <span className="text-[#3478ac]">OpenStreetMap</span> contributors
              </div>
            </div>
            <div className="mt-[61px] h-px bg-[#c4c4c4]" />
            <table className="mt-[58px] w-[2246px] table-fixed border-collapse text-[25.2px] leading-[39px]">
              <thead>
                <tr className="h-[55px] bg-[#f8f8f8] text-left">
                  {COLUMNS.map((c) => (
                    <th key={c} className="border border-[#dee2e6] p-0 pl-[12px] font-semibold tracking-[0.25px]">
                      {c}
                    </th>
                  ))}
                </tr>
              </thead>
              <tbody>
                {ROWS.map((r, i) => (
                  <tr key={i} className="h-[94px]">
                    {r.map((c, j) => (
                      <td
                        key={j}
                        className={`border border-[#dee2e6] p-0 pl-[12px] ${j === 3 || j === 5 ? "tracking-[-0.02px]" : "tracking-[0.45px]"}`}
                      >
                        {c}
                      </td>
                    ))}
                  </tr>
                ))}
              </tbody>
            </table>
          </section>
        </main>
      </div>
    </div>
  );
}
